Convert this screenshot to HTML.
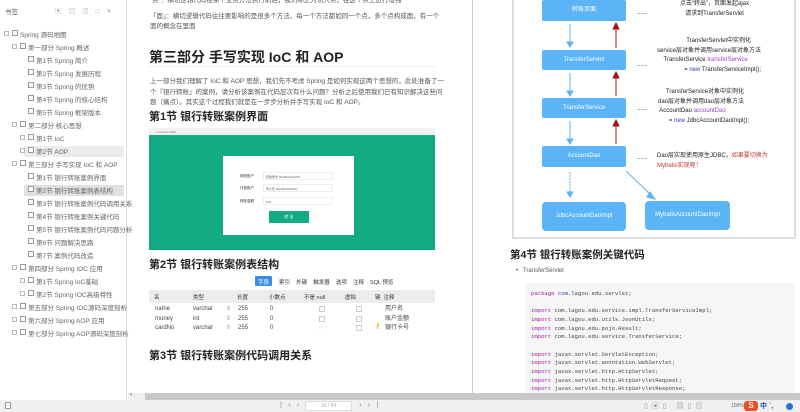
<!DOCTYPE html>
<html><head><meta charset="utf-8"><style>
*{margin:0;padding:0;box-sizing:border-box}
body{width:800px;height:412px;overflow:hidden;position:relative;background:#fff;font-family:"Liberation Sans","Noto Sans CJK SC",sans-serif;color:#333}
.a{position:absolute;white-space:nowrap}
.sb{font-size:6.5px;color:#666}
.cb{position:absolute;width:6px;height:6px;border:1px solid #999;background:#fff}
.ex{position:absolute;width:5px;height:5px;border:1px solid #bbb}
.p{font-size:6.5px;color:#555}
.h{font-weight:bold;color:#222}
.box{position:absolute;background:#5bb4f5;color:#fff;font-size:6px;text-align:center;border-radius:2px}
.code{font-family:"Liberation Mono",monospace;font-size:5.6px;color:#444}
.kw{color:#a020a0}
.d{font-size:6px;color:#222;text-align:center}
</style></head><body>
<div class="a" style="left:0;top:0;width:127px;height:400px;background:#fff;border-right:1px solid #ddd"></div>
<div class="a sb" style="left:5px;top:6px">书签</div>
<div class="a sb" style="left:55px;top:5px;color:#aaa;letter-spacing:7px">▣▤▥□✕</div>
<div class="a" style="left:24px;top:146px;width:100px;height:11px;background:#ebebeb"></div>
<div class="a" style="left:24px;top:185px;width:100px;height:11px;background:#e0e0e0"></div>
<div id="tree"></div>
<script>
var items=[[0,1,"Spring 源码地图"],[1,1,"第一部分 Spring 概述"],[2,0,"第1节 Spring 简介"],[2,0,"第2节 Spring 发展历程"],[2,0,"第3节 Spring 的优势"],[2,0,"第4节 Spring 的核心结构"],[2,0,"第5节 Spring 框架版本"],[1,1,"第二部分 核心思想"],[2,1,"第1节 IoC"],[2,1,"第2节 AOP"],[1,1,"第三部分 手写实现 IoC 和 AOP"],[2,0,"第1节 银行转账案例界面"],[2,0,"第2节 银行转账案例表结构"],[2,0,"第3节 银行转账案例代码调用关系"],[2,0,"第4节 银行转账案例关键代码"],[2,0,"第5节 银行转账案例代码问题分析"],[2,0,"第6节 问题解决思路"],[2,0,"第7节 案例代码改造"],[1,1,"第四部分 Spring IOC 应用"],[2,1,"第1节 Spring IoC基础"],[2,1,"第2节 Spring IOC高级特性"],[1,1,"第五部分 Spring IOC源码深度剖析"],[1,1,"第六部分 Spring AOP 应用"],[1,1,"第七部分 Spring AOP源码深度剖析"]];
var h="";items.forEach(function(it,i){var y=29+i*13,l=it[0];var cx=12+l*8;if(l==2)cx=28;
if(it[1]){var ex=cx-8;h+='<div class="ex" style="left:'+ex+'px;top:'+(y+2)+'px"></div>';}
h+='<div class="cb" style="left:'+cx+'px;top:'+(y+1)+'px"></div>';
h+='<div class="a sb" style="left:'+(cx+8)+'px;top:'+y+'px">'+it[2]+'</div>';});
document.getElementById('tree').innerHTML=h;
</script>
<div class="a" style="left:472px;top:0;width:1px;height:393px;background:#ccc"></div>
<div class="a p" style="left:150px;top:-6px">“点”：横切逻辑代码在某个业务方法执行前后，我们称之为切入点，在这个点上进行增强</div>
<div class="a p" style="left:150px;top:10px">「面」：横切逻辑代码往往要影响的是很多个方法，每一个方法都如同一个点，多个点构成面，有一个</div>
<div class="a p" style="left:150px;top:20px">面的概念在里面</div>
<div class="a h" style="left:149px;top:47px;font-size:14px">第三部分 手写实现 IoC 和 AOP</div>
<div class="a" style="left:149px;top:66px;width:286px;height:1px;background:#eee"></div>
<div class="a p" style="left:150px;top:75px">上一部分我们理解了 IoC 和 AOP 思想，我们先不考虑 Spring 是如何实现这两个思想的，此处准备了一</div>
<div class="a p" style="left:150px;top:86px">个『银行转账』的案例，请分析该案例在代码层次有什么问题？分析之后使用我们已有知识解决这些问</div>
<div class="a p" style="left:150px;top:96px">题（痛点）。其实这个过程我们就是在一步步分析并手写实现 IoC 和 AOP。</div>
<div class="a h" style="left:149px;top:108px;font-size:11px">第1节 银行转账案例界面</div>
<div class="a" style="left:149px;top:128px;width:286px;height:7px;background:#f2f2f2;font-size:3px;color:#888;padding:2px 5px">○ localhost:8080</div>
<div class="a" style="left:149px;top:135px;width:286px;height:115px;background:#13ab83"></div>
<div class="a" style="left:223px;top:156px;width:131px;height:79px;background:#fff"></div>
<div class="a" style="left:240px;top:174px;font-size:3.5px;color:#333">转账账户</div>
<div class="a" style="left:240px;top:186px;font-size:3.5px;color:#333">付款账户</div>
<div class="a" style="left:240px;top:199px;font-size:3.5px;color:#333">转账金额</div>
<div class="a" style="left:263px;top:172px;width:70px;height:8px;border:1px solid #eee;font-size:3px;color:#666;padding:2px">转账账号 6029621011001</div>
<div class="a" style="left:263px;top:184px;width:70px;height:8px;border:1px solid #eee;font-size:3px;color:#666;padding:2px">李大雷 6029621011000</div>
<div class="a" style="left:263px;top:197px;width:70px;height:8px;border:1px solid #eee;font-size:3px;color:#666;padding:2px">100</div>
<div class="a" style="left:269px;top:211px;width:40px;height:12px;background:#13ab83;color:#fff;font-size:4px;text-align:center;line-height:12px">转 出</div>
<div class="a h" style="left:149px;top:256px;font-size:11px">第2节 银行转账案例表结构</div>
<div class="a" style="left:255px;top:276px;width:17px;height:10px;background:#3a8ee6;border-radius:1px"></div>
<div class="a" style="left:258px;top:278px;font-size:5.5px;color:#fff">字段</div>
<div class="a" style="left:279px;top:278px;font-size:5.5px;color:#333">索引 &nbsp;&nbsp; 外键 &nbsp;&nbsp; 触发器 &nbsp;&nbsp; 选项 &nbsp;&nbsp; 注释 &nbsp;&nbsp; SQL 预览</div>
<div class="a" style="left:149px;top:290px;width:286px;height:13px;background:#ececec"></div>
<div class="a" style="left:154px;top:293px;font-size:5.5px;color:#333">名</div>
<div class="a" style="left:193px;top:293px;font-size:5.5px;color:#333">类型</div>
<div class="a" style="left:237px;top:293px;font-size:5.5px;color:#333">长度</div>
<div class="a" style="left:269px;top:293px;font-size:5.5px;color:#333">小数点</div>
<div class="a" style="left:304px;top:293px;font-size:5.5px;color:#333">不是 null</div>
<div class="a" style="left:345px;top:293px;font-size:5.5px;color:#333">虚拟</div>
<div class="a" style="left:375px;top:293px;font-size:5.5px;color:#333">键 &nbsp;注释</div>
<div class="a" style="left:155px;top:305px;font-size:6px;color:#444;line-height:9.7px">name<br>money<br>cardNo</div>
<div class="a" style="left:193px;top:305px;font-size:6px;color:#444;line-height:9.7px">varchar<br>int<br>varchar</div>
<div class="a" style="left:226px;top:305px;font-size:6px;color:#999;line-height:9.7px">⇕<br>⇕<br>⇕</div>
<div class="a" style="left:238px;top:305px;font-size:6px;color:#444;line-height:9.7px">255<br>255<br>255</div>
<div class="a" style="left:270px;top:305px;font-size:6px;color:#444;line-height:9.7px">0<br>0<br>0</div>
<div class="cb" style="left:319px;top:306px;border-color:#ccc"></div><div class="cb" style="left:319px;top:316px;border-color:#ccc"></div>
<div class="cb" style="left:356px;top:306px;border-color:#ccc"></div><div class="cb" style="left:356px;top:316px;border-color:#ccc"></div><div class="cb" style="left:356px;top:325px;border-color:#ccc"></div>
<div class="a" style="left:319px;top:324px;font-size:5px;color:#bbb">✓</div>
<div class="a" style="left:375px;top:322px;font-size:7px;color:#e0a800">⚷</div>
<div class="a" style="left:385px;top:305px;font-size:6px;color:#444;line-height:9.7px">用户名<br>账户金额<br>银行卡号</div>
<div class="a h" style="left:149px;top:347px;font-size:11px">第3节 银行转账案例代码调用关系</div>
<div class="a" style="left:512px;top:-2px;width:284px;height:241px;border:2px solid #ddd;border-top:none"></div>
<div class="box" style="left:542px;top:0;width:84px;height:21px;line-height:21px">转账页面</div>
<div class="box" style="left:542px;top:50px;width:84px;height:20px;line-height:20px">TransferServlet</div>
<div class="box" style="left:542px;top:98px;width:84px;height:20px;line-height:20px">TransferService</div>
<div class="box" style="left:542px;top:146px;width:84px;height:21px;line-height:21px">AccountDao</div>
<div class="box" style="left:542px;top:202px;width:84px;height:29px;line-height:29px;border-radius:4px">JdbcAccountDaoImpl</div>
<div class="box" style="left:645px;top:201px;width:85px;height:29px;line-height:29px;border-radius:4px">MybatisAccountDaoImpl</div>
<svg class="a" style="left:500px;top:0" width="300" height="240">
<g stroke="#5bb4f5" stroke-width="1" fill="#5bb4f5">
<line x1="70" y1="24" x2="70" y2="43"/><path d="M67 42 L73 42 L70 47Z"/>
<line x1="70" y1="73" x2="70" y2="92"/><path d="M67 91 L73 91 L70 96Z"/>
<line x1="70" y1="121" x2="70" y2="140"/><path d="M67 139 L73 139 L70 144Z"/>
<line x1="70" y1="172" x2="70" y2="193" stroke-dasharray="2,1"/><path d="M67 192 L73 192 L70 197Z"/>
<line x1="126" y1="171" x2="152" y2="196"/><path d="M150 192 L155 199 L147 197Z"/>
</g>
<g stroke="#a01818" stroke-width="1" fill="#a01818">
<line x1="116" y1="48" x2="116" y2="28"/><path d="M113 29 L119 29 L116 23Z"/>
<line x1="116" y1="96" x2="116" y2="77"/><path d="M113 78 L119 78 L116 72Z"/>
<line x1="116" y1="144" x2="116" y2="125"/><path d="M113 126 L119 126 L116 120Z"/>
</g></svg>
<div class="a d" style="left:637px;top:10px">......</div>
<div class="a d" style="left:637px;top:62px">......</div>
<div class="a d" style="left:637px;top:106px">......</div>
<div class="a d" style="left:637px;top:155px">......</div>
<div class="a d" style="left:680px;top:-1px;line-height:10px">点击“转出”，页面发起ajax<br>请求到TransferServlet</div>
<div class="a d" style="left:657px;top:37px;line-height:9.5px;text-align:right">TransferServlet中实例化&nbsp;&nbsp;&nbsp;&nbsp;&nbsp;&nbsp;<br>service层对象并调用service层对象方法<br>TransferService <span style="color:#9b3bc9">transferService</span>&nbsp;&nbsp;&nbsp;&nbsp;&nbsp;&nbsp;&nbsp;&nbsp;<br>= <span style="color:#2a3bbf">new</span> TransferServiceImpl();</div>
<div class="a d" style="left:658px;top:88px;line-height:9.5px;text-align:right">TransferService对象中实例化&nbsp;&nbsp;&nbsp;<br>dao层对象并调用dao层对象方法&nbsp;&nbsp;&nbsp;<br>AccountDao <span style="color:#9b3bc9">accountDao</span>&nbsp;&nbsp;&nbsp;&nbsp;&nbsp;&nbsp;&nbsp;&nbsp;&nbsp;&nbsp;&nbsp;&nbsp;&nbsp;&nbsp;<br>= <span style="color:#2a3bbf">new</span> JdbcAccountDaoImpl();</div>
<div class="a d" style="left:657px;top:151px;line-height:10px;text-align:left">Dao层实现使用原生JDBC，<span style="color:#c0392b">如果要切换为</span><br><span style="color:#c0392b">Mybatis实现呢！</span></div>
<div class="a h" style="left:510px;top:247px;font-size:10.5px">第4节 银行转账案例关键代码</div>
<div class="a" style="left:516px;top:268px;font-size:6px;color:#555">•&nbsp;&nbsp; TransferServlet</div>
<div class="a" style="left:525px;top:283px;width:270px;height:115px;background:#f6f6f6"></div>
<div class="a code" style="left:531px;top:290px;line-height:8.65px"><span class="kw">package</span> <span style="color:#2a3bbf">com.</span>lagou.edu.servlet;<br><br><span class="kw">import</span> com.lagou.edu.service.impl.TransferServiceImpl;<br><span class="kw">import</span> com.lagou.edu.utils.JsonUtils;<br><span class="kw">import</span> com.lagou.edu.pojo.Result;<br><span class="kw">import</span> com.lagou.edu.service.TransferService;<br><br><span class="kw">import</span> javax.servlet.ServletException;<br><span class="kw">import</span> javax.servlet.annotation.WebServlet;<br><span class="kw">import</span> javax.servlet.http.HttpServlet;<br><span class="kw">import</span> javax.servlet.http.HttpServletRequest;<br><span class="kw">import</span> javax.servlet.http.HttpServletResponse;</div>
<div class="a" style="left:128px;top:393px;width:672px;height:7px;background:#f0f0f0"></div>
<div class="a" style="left:145px;top:393px;width:655px;height:7px;background:#c8c8c8"></div>
<div class="a" style="left:130px;top:392px;font-size:6px;color:#333">‹</div>
<div class="a" style="left:0;top:400px;width:800px;height:12px;background:#f0f0f0"></div>
<div class="a" style="left:5px;top:402px;width:6px;height:7px;border:1px solid #999;background:#fff"></div>
<div class="a" style="left:280px;top:400px;font-size:8px;color:#999;letter-spacing:6px">|‹‹</div>
<div class="a" style="left:305px;top:401px;width:47px;height:10px;background:#fff;border:1px solid #ddd;font-size:5px;color:#aaa;text-align:center;line-height:8px">10 / 94</div>
<div class="a" style="left:359px;top:400px;font-size:8px;color:#999;letter-spacing:6px">››|</div>
<div class="a" style="left:644px;top:401px;font-size:7px;color:#999;letter-spacing:4px">▯▣▯ ▧▯▥</div>
<div class="a" style="left:731px;top:403px;font-size:5px;color:#666">100%</div>
<div class="a" style="left:744px;top:401px;width:14px;height:10px;background:#f04e23;border-radius:3px;color:#fff;font-size:8px;line-height:10px;text-align:center;font-weight:bold">S</div>
<div class="a" style="left:760px;top:401px;font-size:7px;color:#1a5dd0;font-weight:bold">中 ˋ,</div>
<div class="a" style="left:786px;top:403px;width:7px;height:7px;border-radius:50%;background:#2a6ed8"></div>
</body></html>
